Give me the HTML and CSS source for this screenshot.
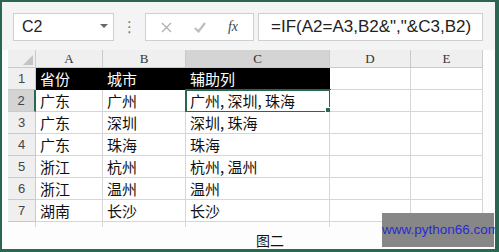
FILE: index.html
```html
<!DOCTYPE html>
<html>
  <head>
    <title>辅助列</title>
    <link rel="stylesheet" href="styles.css">
  </head>
  <body>
    <div class="frame">
      <div class="toolbar">
        <div class="namebox">
          <span>C2</span>
          <span class="caret"></span>
        </div>
        <div class="dots">⋮</div>
        <div class="fbuttons">
          <svg class="icon" width="11" height="11" viewBox="0 0 11 11">
            <path d="M1 1 L10 10 M10 1 L1 10" stroke="#b0b0b0" stroke-width="1.3" fill="none"/>
          </svg>
          <svg class="icon" width="12" height="11" viewBox="0 0 12 11">
            <path d="M1 6 L4.5 9.5 L11 1" stroke="#bdbdbd" stroke-width="2.2" fill="none"/>
          </svg>
          <span class="fx">fx</span>
        </div>
        <div class="formula">=IF(A2=A3,B2&amp;","&amp;C3,B2)</div>
      </div>

      <div class="sheet">
        <div class="grid">
          <div class="corner"><span class="tri"></span></div>
          <div class="colhead">A</div>
          <div class="colhead">B</div>
          <div class="colhead active">C</div>
          <div class="colhead">D</div>
          <div class="colhead">E</div>

          <div class="rowhead">1</div>
          <div class="cell dark">省份</div>
          <div class="cell dark">城市</div>
          <div class="cell dark">辅助列</div>
          <div class="cell"></div>
          <div class="cell"></div>

          <div class="rowhead active">2</div>
          <div class="cell">广东</div>
          <div class="cell">广州</div>
          <div class="cell sel">广州, 深圳, 珠海<span class="handle"></span></div>
          <div class="cell"></div>
          <div class="cell"></div>

          <div class="rowhead">3</div>
          <div class="cell">广东</div>
          <div class="cell">深圳</div>
          <div class="cell">深圳, 珠海</div>
          <div class="cell"></div>
          <div class="cell"></div>

          <div class="rowhead">4</div>
          <div class="cell">广东</div>
          <div class="cell">珠海</div>
          <div class="cell">珠海</div>
          <div class="cell"></div>
          <div class="cell"></div>

          <div class="rowhead">5</div>
          <div class="cell">浙江</div>
          <div class="cell">杭州</div>
          <div class="cell">杭州, 温州</div>
          <div class="cell"></div>
          <div class="cell"></div>

          <div class="rowhead">6</div>
          <div class="cell">浙江</div>
          <div class="cell">温州</div>
          <div class="cell">温州</div>
          <div class="cell"></div>
          <div class="cell"></div>

          <div class="rowhead">7</div>
          <div class="cell">湖南</div>
          <div class="cell">长沙</div>
          <div class="cell">长沙</div>
          <div class="cell"></div>
          <div class="cell"></div>

          <div class="stub"></div>
          <div class="stub"></div>
          <div class="stub"></div>
          <div class="stub"></div>
          <div class="stub"></div>
          <div class="stub"></div>
        </div>
        <div class="caption">图二</div>
      </div>

      <div class="watermark">www.python66.com</div>
    </div>
  </body>
</html>
```

FILE: styles.css
```css
body {
  margin: 0;
  background: #fff;
}

.frame {
  position: relative;
  width: 499px;
  height: 252px;
  box-sizing: border-box;
  border-style: solid;
  border-color: #2a6651;
  border-width: 2px 4px 3px 2px;
  background: #fdfdfd;
  overflow: hidden;
}

.toolbar {
  display: flex;
  align-items: flex-start;
  height: 48px;
  box-sizing: border-box;
  padding: 11px 0 0 11px;
  background: #f4f4f4;
}

.namebox {
  display: flex;
  align-items: center;
  justify-content: space-between;
  width: 101px;
  height: 28px;
  box-sizing: border-box;
  padding: 0 5px 0 8px;
  background: #fff;
  border: 1px solid #cfcfcf;
  font-family: "Liberation Sans", sans-serif;
  font-size: 16px;
  color: #222;
}

.caret {
  width: 0;
  height: 0;
  border-left: 4px solid transparent;
  border-right: 4px solid transparent;
  border-top: 4px solid #666;
  margin-bottom: 2px;
}

.dots {
  width: 31px;
  height: 28px;
  line-height: 28px;
  text-align: center;
  font-family: "DejaVu Sans", sans-serif;
  font-size: 15px;
  color: #777;
}

.fbuttons {
  display: flex;
  align-items: center;
  justify-content: space-around;
  width: 109px;
  height: 28px;
  box-sizing: border-box;
  padding: 0 4px;
  background: #fff;
  border: 1px solid #cfcfcf;
}

.icon {
  display: block;
}

.fx {
  font-family: "Liberation Serif", serif;
  font-style: italic;
  font-size: 14px;
  color: #444;
}

.formula {
  width: 225px;
  height: 28px;
  margin-left: 4px;
  box-sizing: border-box;
  padding-left: 12px;
  line-height: 26px;
  background: #fff;
  border: 1px solid #cfcfcf;
  font-family: "Liberation Sans", sans-serif;
  font-size: 17px;
  color: #222;
}

.sheet {
  background: #fdfdfd;
}

.grid {
  display: grid;
  grid-template-columns: 28px 67px 83px 144px 81px 72px;
  grid-template-rows: 18px repeat(7, 22px) 5px;
  margin-left: 6px;
}

.corner,
.colhead,
.rowhead,
.cell {
  box-sizing: border-box;
  border-right: 1px solid #d6d6d6;
  border-bottom: 1px solid #d6d6d6;
}

.corner {
  display: flex;
  align-items: flex-end;
  justify-content: flex-end;
  padding: 0 2px 2px 0;
  background: #efefef;
  border-color: #cacaca;
}

.tri {
  width: 0;
  height: 0;
  border-left: 10px solid transparent;
  border-bottom: 10px solid #c4c4c4;
}

.colhead {
  background: #efefef;
  border-color: #cacaca;
  text-align: center;
  line-height: 17px;
  font-family: "Liberation Serif", serif;
  font-size: 13px;
  color: #333;
}

.colhead.active {
  background: #d4d4d4;
}

.rowhead {
  background: #efefef;
  border-color: #cacaca;
  text-align: center;
  line-height: 21px;
  font-family: "Liberation Sans", sans-serif;
  font-size: 13px;
  color: #444;
}

.rowhead.active {
  background: #d4d4d4;
  border-right: 2px solid #2a6651;
}

.cell {
  position: relative;
  padding-left: 4px;
  line-height: 21px;
  background: #fff;
  font-family: "Noto Sans CJK SC", sans-serif;
  font-size: 15px;
  color: #111;
  white-space: nowrap;
}

.cell.dark {
  background: #000;
  border-color: #000;
  color: #fff;
}

.cell.sel {
  outline: 2px solid #2a6651;
  outline-offset: -1px;
}

.handle {
  position: absolute;
  right: -3px;
  bottom: -3px;
  width: 5px;
  height: 5px;
  background: #2a6651;
  border: 1px solid #fff;
}

.stub {
  border-right: 1px solid #d6d6d6;
}

.caption {
  padding: 5px 0 0 254px;
  font-family: "Noto Sans CJK SC", sans-serif;
  font-size: 14px;
  line-height: 16px;
  color: #111;
}

.watermark {
  position: absolute;
  left: 380px;
  top: 211px;
  width: 112px;
  height: 34px;
  background: #878787;
  color: #2a2ad8;
  font-family: "Liberation Sans", sans-serif;
  font-size: 13.5px;
  line-height: 34px;
  text-align: center;
}
```
